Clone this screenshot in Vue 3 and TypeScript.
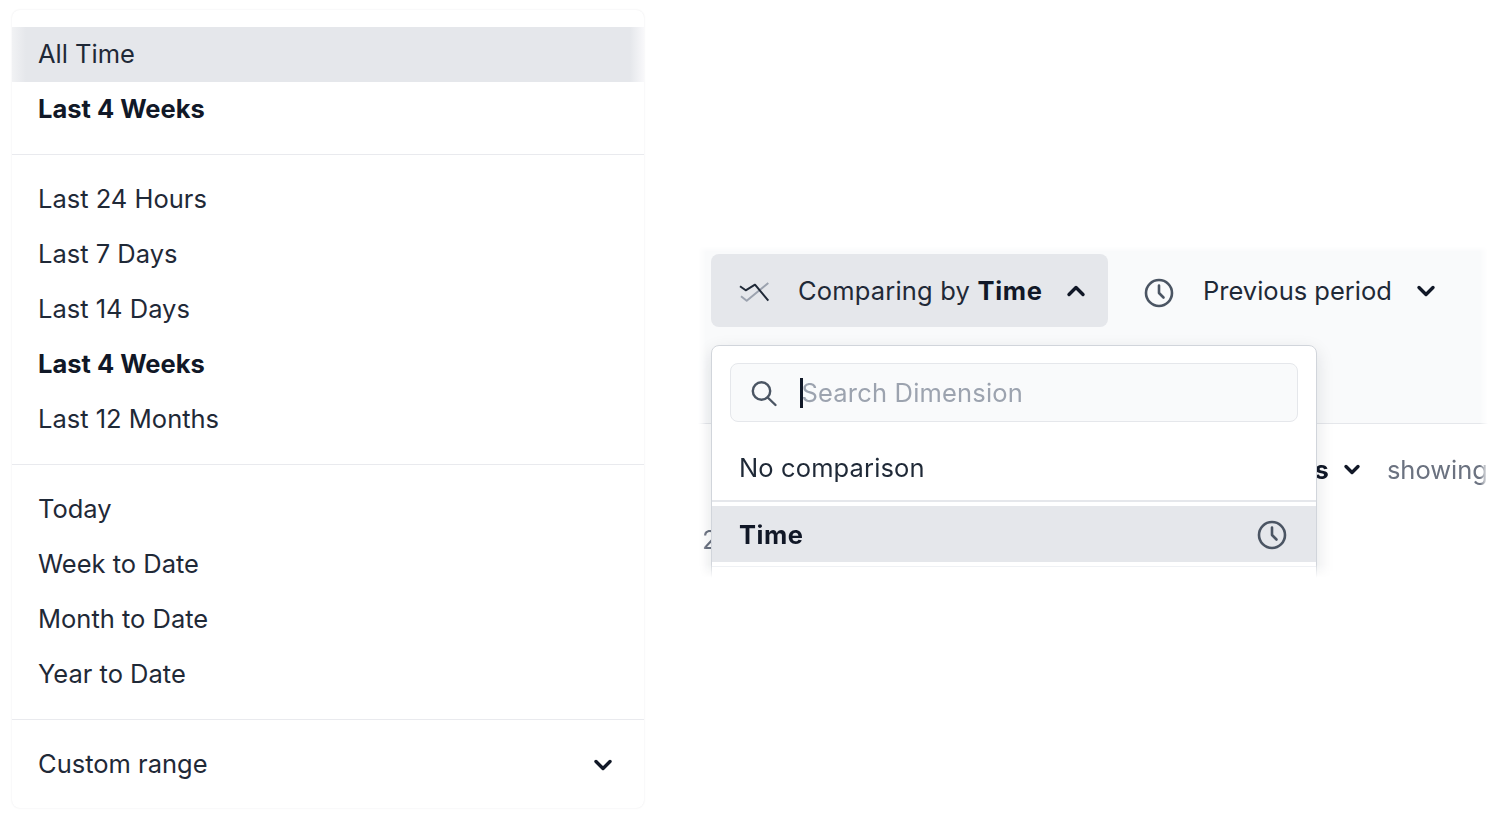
<script setup lang="ts">
const quick = ['Last 24 Hours', 'Last 7 Days', 'Last 14 Days', 'Last 4 Weeks', 'Last 12 Months']
const toDate = ['Today', 'Week to Date', 'Month to Date', 'Year to Date']
const selected = 'Last 4 Weeks'
</script>

<template>
  <div class="page">
    <div class="range-card">
      <div class="group">
        <div class="row hover">All Time</div>
        <div class="row strong">Last 4 Weeks</div>
      </div>
      <div class="group">
        <div v-for="item in quick" :key="item" class="row" :class="{ strong: item === selected }">{{ item }}</div>
      </div>
      <div class="group">
        <div v-for="item in toDate" :key="item" class="row">{{ item }}</div>
      </div>
      <div class="group last">
        <div class="row custom">
          <span>Custom range</span>
          <svg class="chev" width="20" height="12" viewBox="0 0 20 12"><path d="M3 2.5 10 9.5 17 2.5" /></svg>
        </div>
      </div>
    </div>

    <div class="explore">
      <div class="toolbar">
        <div class="compare-btn">
          <svg class="lines" width="31" height="22" viewBox="0 0 31 22">
            <path class="light" d="M2 15.3 7.7 19.7 29.3 2" />
            <path class="dark" d="M1 5.3 6.7 9.3 16 3.7 29.3 19.7" />
          </svg>
          <span class="label">Comparing by <b>Time</b></span>
          <svg class="chev" width="20" height="12" viewBox="0 0 20 12"><path d="M3 9.5 10 2.5 17 9.5" /></svg>
        </div>
        <div class="period-btn">
          <svg class="clock" width="30" height="30" viewBox="0 0 30 30">
            <circle cx="15" cy="15" r="13" />
            <path d="M15 7.5V15L19.5 19.5" />
          </svg>
          <span class="label">Previous period</span>
          <svg class="chev" width="20" height="12" viewBox="0 0 20 12"><path d="M3 2.5 10 9.5 17 2.5" /></svg>
        </div>
      </div>

      <div class="summary">
        <b class="measure">Measures</b>
        <svg class="chev small" width="18" height="11" viewBox="0 0 18 11"><path d="M3 2.5 9 8.5 15 2.5" /></svg>
        <span class="showing">showing</span>
      </div>
      <div class="count">2</div>

      <div class="popover">
        <div class="search">
          <svg class="glass" width="28" height="28" viewBox="0 0 28 28">
            <circle cx="10.5" cy="12" r="8.7" />
            <path d="M16.7 18.5 24.5 26" />
          </svg>
          <span class="caret"></span>
          <span class="placeholder">Search Dimension</span>
        </div>
        <div class="option none">No comparison</div>
        <div class="option active">
          <b>Time</b>
          <svg class="clock" width="30" height="30" viewBox="0 0 30 30">
            <circle cx="15" cy="15" r="13" />
            <path d="M15 7.5V15L19.5 19.5" />
          </svg>
        </div>
        <div class="option-rule"></div>
      </div>
    </div>
  </div>
</template>

<style>
body {
  background: #fff;
  overflow: hidden;
}
</style>

<style scoped>
.page {
  display: flex;
  align-items: flex-start;
  width: 1496px;
  height: 818px;
  overflow: hidden;
  font-family: Inter, "Liberation Sans", sans-serif;
  font-size: 25.5px;
  color: #1f2937;
  background: #fff;
  filter: blur(0.35px);
}

.range-card {
  box-sizing: border-box;
  width: 632px;
  height: 798px;
  margin: 10px 0 0 12px;
  padding-top: 17px;
  border-radius: 8px;
  background: #fff;
  box-shadow: 0 0 2px rgba(17, 24, 39, 0.1);
}

.group {
  padding-bottom: 17px;
  margin-bottom: 17px;
  border-bottom: 1.5px solid #e9eaee;
}

.group.last {
  border-bottom: none;
  margin-bottom: 0;
}

.row {
  display: flex;
  align-items: center;
  box-sizing: border-box;
  height: 55px;
  padding: 0 26px 2px;
}

.row.hover {
  background: linear-gradient(to right, #f1f2f4, #e5e7eb 14px, #e5e7eb calc(100% - 14px), #f8f8fa);
}

.strong {
  font-weight: 700;
  color: #111827;
}

.custom {
  justify-content: space-between;
  padding-right: 31px;
}

.chev {
  flex: none;
  fill: none;
  stroke: #111827;
  stroke-width: 3.4;
  stroke-linecap: round;
  stroke-linejoin: round;
}

.custom .chev {
  margin-top: 2px;
}

.explore {
  position: relative;
  flex: none;
  width: 790px;
  height: 332px;
  margin: 246px 0 0 54px;
  -webkit-mask-image: linear-gradient(to right, transparent, #000 8px, #000 calc(100% - 8px), transparent),
    linear-gradient(to bottom, transparent, #000 6px, #000 calc(100% - 14px), transparent);
  mask-image: linear-gradient(to right, transparent, #000 8px, #000 calc(100% - 8px), transparent),
    linear-gradient(to bottom, transparent, #000 6px, #000 calc(100% - 14px), transparent);
  -webkit-mask-composite: source-in;
  mask-composite: intersect;
}

.toolbar {
  box-sizing: border-box;
  display: flex;
  height: 178px;
  padding: 8px 0 0 13px;
  background: #f9fafb;
  border-bottom: 1.5px solid #e5e7eb;
}

.compare-btn,
.period-btn {
  box-sizing: border-box;
  display: flex;
  align-items: center;
  height: 73px;
}

.compare-btn {
  width: 397px;
  padding-left: 28px;
  border-radius: 8px;
  background: #e5e7eb;
}

.compare-btn .label {
  margin-left: 28px;
  letter-spacing: 0.18px;
}

.compare-btn b {
  letter-spacing: 0.7px;
  color: #111827;
}

.compare-btn .chev {
  margin-left: 23px;
}

.period-btn {
  padding-left: 36px;
}

.period-btn .clock {
  margin-top: 4px;
}

.period-btn .label {
  margin-left: 29px;
}

.period-btn .chev {
  margin-left: 24px;
}

.lines {
  flex: none;
  margin-top: 3px;
  fill: none;
  stroke-width: 2;
  stroke-linejoin: round;
}

.lines .dark {
  stroke: #1f2937;
}

.lines .light {
  stroke: #9ca3af;
}

.clock {
  flex: none;
  fill: none;
  stroke: #4b5563;
  stroke-width: 2.6;
  stroke-linecap: round;
  stroke-linejoin: round;
}

.summary {
  display: flex;
  align-items: center;
  height: 40px;
  margin-top: 25px;
  white-space: nowrap;
}

.measure {
  box-sizing: border-box;
  width: 631px;
  text-align: right;
  color: #111827;
}

.small {
  margin-left: 14px;
}

.showing {
  margin-left: 26px;
  color: #6b7280;
}

.count {
  height: 40px;
  margin-top: 31px;
  padding-left: 4px;
  line-height: 40px;
  color: #6b7280;
}

.popover {
  position: absolute;
  left: 13px;
  top: 99px;
  box-sizing: border-box;
  width: 606px;
  height: 260px;
  padding-top: 17px;
  border: 1.5px solid #d1d5db;
  border-radius: 8px;
  background: #fff;
  box-shadow: 0 6px 18px rgba(17, 24, 39, 0.12);
}

.search {
  display: flex;
  align-items: center;
  box-sizing: border-box;
  height: 59px;
  margin: 0 18px;
  padding-left: 20px;
  border: 1.5px solid #e5e7eb;
  border-radius: 8px;
  background: #f9fafb;
}

.glass {
  flex: none;
  fill: none;
  stroke: #4b5563;
  stroke-width: 2.4;
  stroke-linecap: round;
}

.caret {
  flex: none;
  width: 2.5px;
  height: 30px;
  margin-left: 21px;
  background: #111827;
}

.placeholder {
  margin-left: -1px;
  letter-spacing: 0.18px;
  color: #9ca3af;
}

.option {
  display: flex;
  align-items: center;
  justify-content: space-between;
  box-sizing: border-box;
  padding: 0 29px 0 27px;
}

.none {
  height: 80px;
  padding-top: 12px;
  letter-spacing: 0.12px;
  border-bottom: 2px solid #e5e7eb;
}

.active {
  height: 56px;
  margin-top: 4px;
  background: #e5e7eb;
  color: #111827;
}

.active b {
  letter-spacing: 0.5px;
}

.active .clock {
  margin-top: 2px;
}

.option-rule {
  margin-top: 4px;
  border-top: 1.5px solid #eceef1;
}
</style>
